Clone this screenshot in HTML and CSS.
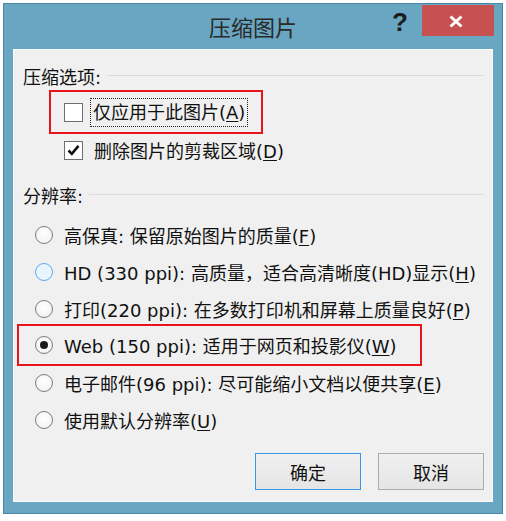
FILE: index.html
```html
<!DOCTYPE html>
<html lang="zh-CN">
<head>
<meta charset="utf-8">
<title>压缩图片</title>
<link rel="stylesheet" href="styles.css">
</head>
<body>
<div class="dialog">
  <div class="titlebar">
    <div></div>
    <div class="title">压缩图片</div>
    <div class="controls">
      <span class="help">?</span>
      <span class="close">
        <svg width="14" height="13" viewBox="0 0 14 13"><path d="M1.5 1.5 L12.5 11.5 M12.5 1.5 L1.5 11.5" stroke="#fff" stroke-width="3" fill="none"/></svg>
      </span>
    </div>
  </div>
  <div class="panel">
    <div class="group-head"><span>压缩选项:</span><i class="rule"></i></div>
    <div class="hl hl-cb">
      <div class="cb-row">
        <span class="checkbox"></span>
        <span class="focus">仅应用于此图片(<u>A</u>)</span>
      </div>
    </div>
    <div class="cb-row cb-plain">
      <span class="checkbox">
        <svg width="13" height="12" viewBox="0 0 13 12"><path d="M1.5 6.5 L4.8 9.8 L11.5 1.8" stroke="#111" stroke-width="2.6" fill="none"/></svg>
      </span>
      <span class="label">删除图片的剪裁区域(<u>D</u>)</span>
    </div>
    <div class="group-head head2"><span>分辨率:</span><i class="rule"></i></div>
    <div class="opts">
      <div class="opt"><span class="radio"></span><span>高保真: 保留原始图片的质量(<u>F</u>)</span></div>
      <div class="opt"><span class="radio hover"></span><span>HD (330 ppi): 高质量，适合高清晰度(HD)显示(<u>H</u>)</span></div>
      <div class="opt"><span class="radio"></span><span>打印(220 ppi): 在多数打印机和屏幕上质量良好(<u>P</u>)</span></div>
      <div class="hl hl-radio">
        <div class="opt"><span class="radio checked"></span><span>Web (150 ppi): 适用于网页和投影仪(<u>W</u>)</span></div>
      </div>
      <div class="opt"><span class="radio"></span><span>电子邮件(96 ppi): 尽可能缩小文档以便共享(<u>E</u>)</span></div>
      <div class="opt"><span class="radio"></span><span>使用默认分辨率(<u>U</u>)</span></div>
    </div>
    <div class="buttons">
      <button class="btn default">确定</button>
      <button class="btn">取消</button>
    </div>
  </div>
</div>
</body>
</html>
```

FILE: styles.css
```css
html, body {
  margin: 0;
  padding: 0;
  background: #ffffff;
}
body {
  font-family: "DejaVu Sans", "Noto Sans CJK SC", sans-serif;
  font-size: 18px;
  color: #111;
}
.dialog {
  margin: 3px 0 0 3px;
  width: 500px;
  height: 511px;
  box-sizing: border-box;
  border: 1px solid #4a87a4;
  background: #68a6c2;
  padding: 0 9px 11px 9px;
  display: flex;
  flex-direction: column;
}
.titlebar {
  height: 45px;
  flex: none;
  display: grid;
  grid-template-columns: 1fr auto 1fr;
}
.title {
  font-family: "Noto Sans CJK SC", sans-serif;
  font-size: 22px;
  line-height: 44px;
  color: #2a2a2a;
}
.controls {
  display: flex;
  justify-content: flex-end;
  align-items: flex-start;
  margin-right: -1px;
}
.help {
  font-family: "Liberation Sans", sans-serif;
  font-weight: bold;
  font-size: 26px;
  line-height: 31px;
  height: 31px;
  margin-top: 3px;
  margin-right: 14px;
  color: #1d1d1d;
}
.close {
  width: 72px;
  height: 31px;
  margin-top: 1px;
  background: #c75050;
  display: flex;
  align-items: center;
  justify-content: center;
}
.close svg {
  margin-left: -5px;
  margin-top: 1px;
}
.panel {
  flex: 1;
  background: #f0f0f0;
  border: 1px solid #fafafa;
  display: flex;
  flex-direction: column;
  padding: 15px 8px 11px 9px;
}
.group-head {
  height: 26px;
  display: flex;
  align-items: center;
  line-height: 26px;
}
.group-head .rule {
  flex: 1;
  height: 1px;
  background: #dcdcdc;
  margin-left: 6px;
  margin-top: -5px;
}
.head2 {
  margin-top: 18px;
}
.hl {
  border: 2px solid #e8141c;
}
.hl-cb {
  margin: -1px 0 0 26px;
  width: 210px;
  height: 40px;
  display: flex;
  align-items: center;
}
.cb-row {
  display: flex;
  align-items: center;
}
.hl-cb .cb-row {
  padding-left: 13px;
}
.cb-plain {
  height: 32px;
  margin-left: 41px;
}
.checkbox {
  width: 17px;
  height: 17px;
  border: 1px solid #6f6f6f;
  background: #fff;
  display: flex;
  align-items: center;
  justify-content: center;
  flex: none;
}
.focus {
  margin-left: 8px;
  padding: 0 2px 0 2px;
  height: 27px;
  line-height: 27px;
  outline: 1px dotted #222;
}
.label {
  margin-left: 11px;
}
.opts {
  margin-top: 6px;
  display: flex;
  flex-direction: column;
}
.opt {
  height: 37px;
  display: flex;
  align-items: center;
  padding-left: 12px;
  white-space: nowrap;
}
.radio {
  width: 18px;
  height: 18px;
  box-sizing: border-box;
  border: 1px solid #7c7c7c;
  border-radius: 50%;
  background: radial-gradient(circle at 50% 40%, #ffffff 0%, #f4f4f4 70%, #e8e8e8 100%);
  margin-right: 11px;
  flex: none;
  display: flex;
  align-items: center;
  justify-content: center;
}
.radio.hover {
  border-color: #5aa7ef;
  background: #eaf4fe;
}
.radio.checked::after {
  content: "";
  width: 8px;
  height: 8px;
  border-radius: 50%;
  background: #1a1a1a;
}
.hl-radio {
  margin: -3px 0 -2px -6px;
  width: 401px;
  height: 38px;
  display: flex;
  align-items: center;
}
.hl-radio .opt {
  padding-left: 16px;
  height: 38px;
}
.buttons {
  margin-top: auto;
  display: flex;
  justify-content: flex-end;
  gap: 17px;
}
.btn {
  width: 106px;
  height: 37px;
  font-family: "Noto Sans CJK SC", sans-serif;
  font-size: 18px;
  color: #111;
  border: 1px solid #acacac;
  background: linear-gradient(#f0f0f0, #e5e5e5);
  padding: 0;
}
.btn.default {
  border-color: #3c96e6;
}
u {
  text-decoration-thickness: 1px;
  text-underline-offset: 2px;
}
```
